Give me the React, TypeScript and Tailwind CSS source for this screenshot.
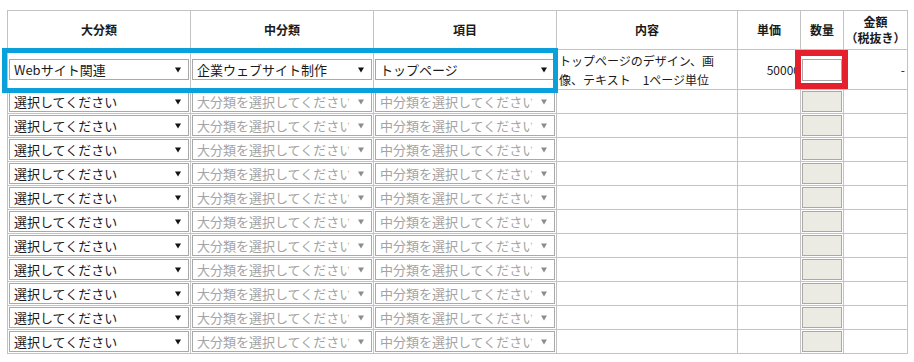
import React from "react";

interface SelectBoxProps {
  label: string;
  disabled?: boolean;
  focused?: boolean;
}

function SelectBox({ label, disabled, focused }: SelectBoxProps) {
  return (
    <div
      className={`mx-auto flex h-[21px] w-[180px] items-center border bg-white ${
        focused ? "border-[#7eaee0]" : "border-[#a9a9a9]"
      }`}
    >
      <span
        className={`flex-1 overflow-hidden whitespace-nowrap pl-[4px] text-[13px] leading-[19px] ${
          disabled ? "text-[#a3a3a3]" : "text-[#1a1a1a]"
        }`}
      >
        {label}
      </span>
      <svg width="19" height="8" viewBox="0 0 19 8" className="mr-[3px] shrink-0">
        <polygon
          points="9,1.5 15,1.5 12,6.5"
          fill={disabled ? "#8c8c8c" : "#111"}
        />
      </svg>
    </div>
  );
}

const emptyRows = Array.from({ length: 11 }, (_, i) => i);

export default function App() {
  return (
    <div
      className="relative h-[362px] w-[914px] bg-white pl-[7px] pt-[10px]"
      style={{ fontFamily: '"Noto Sans CJK JP", "Noto Sans", sans-serif' }}
    >
      <table className="w-[901px] table-fixed border-collapse text-[#1a1a1a]">
        <colgroup>
          <col className="w-[183px]" />
          <col className="w-[183px]" />
          <col className="w-[183px]" />
          <col className="w-[181px]" />
          <col className="w-[63px]" />
          <col className="w-[43px]" />
          <col className="w-[64px]" />
        </colgroup>
        <thead>
          <tr className="h-[39px] text-[12px] font-bold">
            <th className="border border-[#c3c3c3] p-0">大分類</th>
            <th className="border border-[#c3c3c3] p-0">中分類</th>
            <th className="border border-[#c3c3c3] p-0">項目</th>
            <th className="border border-[#c3c3c3] p-0">内容</th>
            <th className="border border-[#c3c3c3] p-0">単価</th>
            <th className="border border-[#c3c3c3] p-0">数量</th>
            <th className="whitespace-nowrap border border-[#c3c3c3] p-0 leading-[16px]">
              金額
              <br />
              （税抜き）
            </th>
          </tr>
        </thead>
        <tbody>
          <tr className="h-[40px]">
            <td className="border border-[#c3c3c3] p-0">
              <SelectBox label="Webサイト関連" />
            </td>
            <td className="border border-[#c3c3c3] p-0">
              <SelectBox label="企業ウェブサイト制作" />
            </td>
            <td className="border border-[#c3c3c3] p-0">
              <SelectBox label="トップページ" focused />
            </td>
            <td className="border border-[#c3c3c3] py-0 pl-[2px] pr-0 text-[12px] leading-[19px]">
              トップページのデザイン、画像、テキスト　1ページ単位
            </td>
            <td className="overflow-visible whitespace-nowrap border border-[#c3c3c3] p-0 text-right text-[12px]">
              50000
            </td>
            <td className="border border-[#c3c3c3] p-0">
              <input
                type="text"
                className="mx-auto block h-[22px] w-[40px] border border-[#a9a9a9] bg-white outline-none"
              />
            </td>
            <td className="border border-[#c3c3c3] p-0 pr-[2px] text-right text-[12px]">-</td>
          </tr>
          {emptyRows.map((i) => (
            <tr key={i} className="h-[24px]">
              <td className="border border-[#c3c3c3] p-0">
                <SelectBox label="選択してください" />
              </td>
              <td className="border border-[#c3c3c3] p-0">
                <SelectBox label="大分類を選択してください" disabled />
              </td>
              <td className="border border-[#c3c3c3] p-0">
                <SelectBox label="中分類を選択してください" disabled />
              </td>
              <td className="border border-[#c3c3c3] p-0"></td>
              <td className="border border-[#c3c3c3] p-0"></td>
              <td className="border border-[#c3c3c3] p-0">
                <input
                  type="text"
                  disabled
                  className="mx-auto block h-[21px] w-[40px] border border-[#a9a9a9] bg-[#ebebe4]"
                />
              </td>
              <td className="border border-[#c3c3c3] p-0"></td>
            </tr>
          ))}
        </tbody>
      </table>

      {/* highlight boxes */}
      <div className="pointer-events-none absolute left-[2px] top-[48px] h-[45px] w-[556px] border-[5px] border-[#0aa0dc]" />
      <div className="pointer-events-none absolute left-[795px] top-[50px] h-[39px] w-[53px] border-[6px] border-[#e3202b]" />
    </div>
  );
}
